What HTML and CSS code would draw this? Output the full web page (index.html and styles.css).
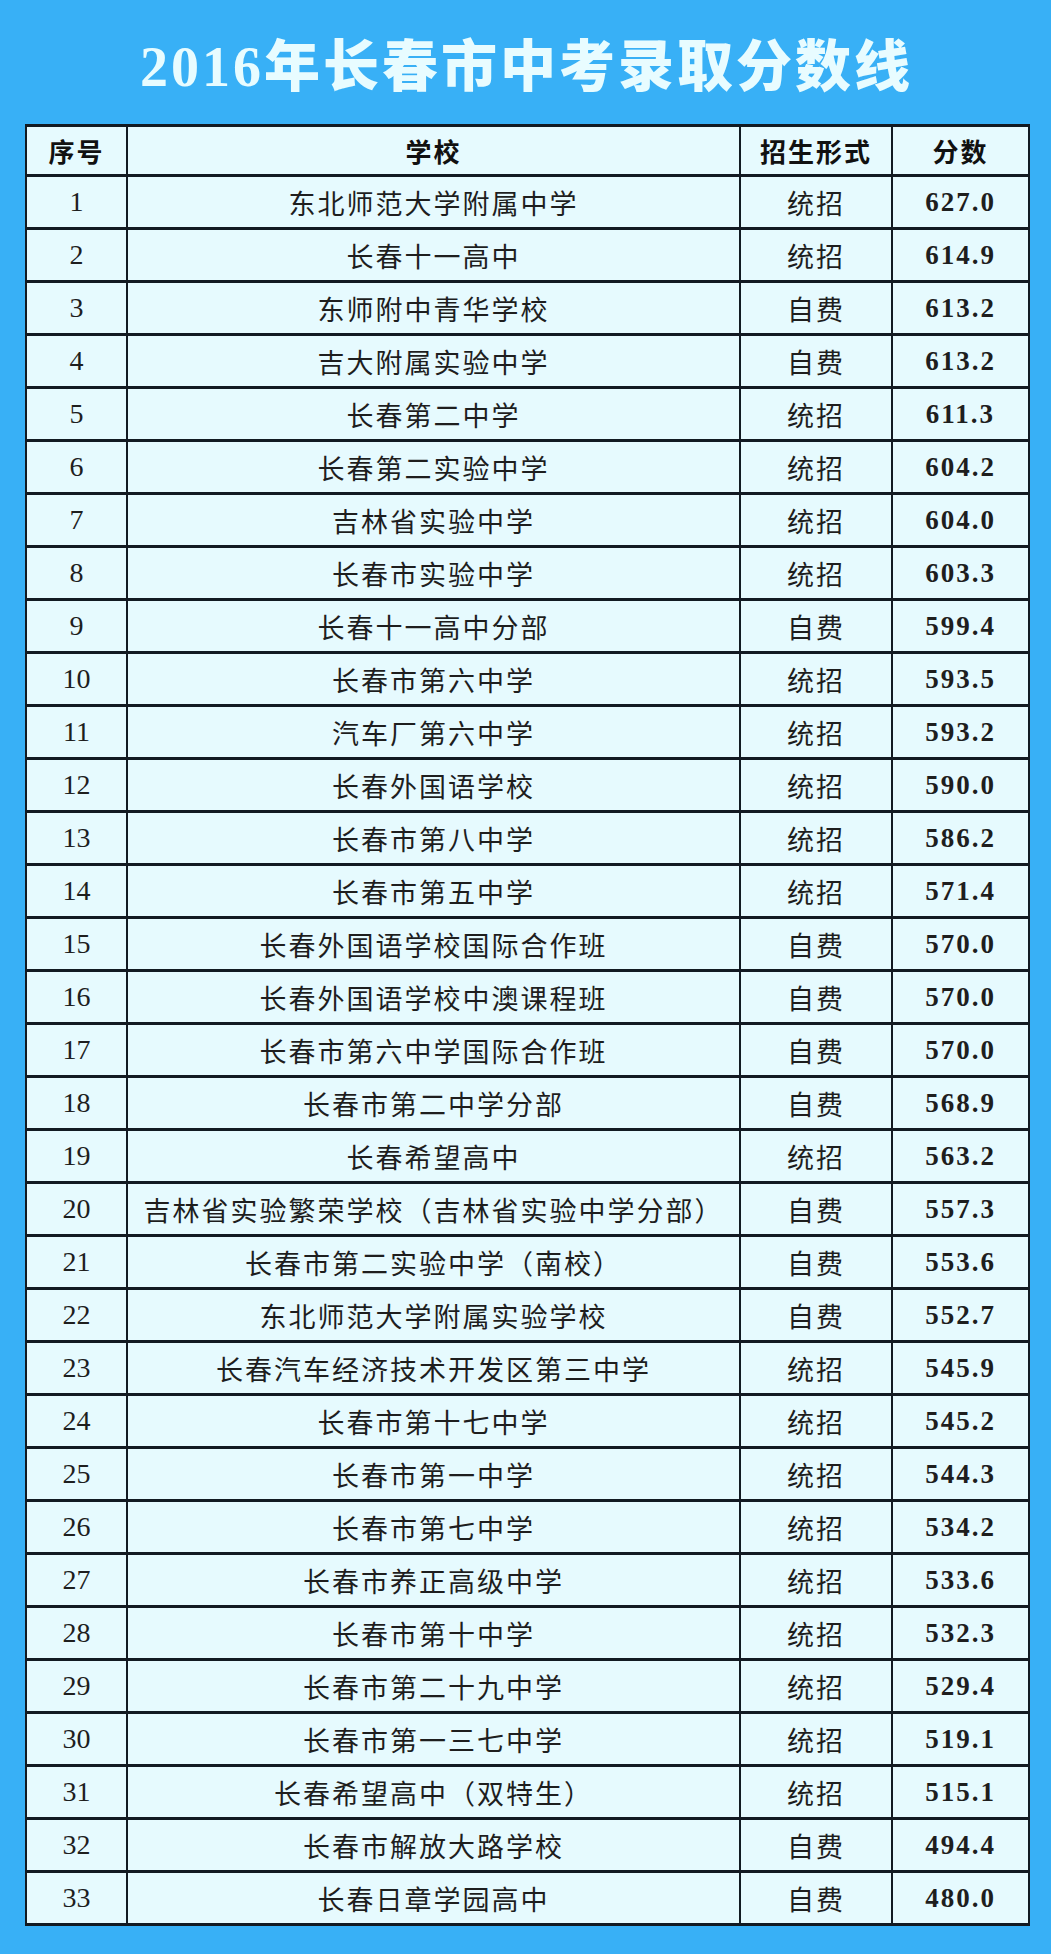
FILE: index.html
```html
<!DOCTYPE html>
<html lang="zh-CN">
<head>
<meta charset="utf-8">
<title>2016年长春市中考录取分数线</title>
<link rel="stylesheet" href="styles.css">
</head>
<body>
<div class="page">
  <h1 class="title">2016年长春市中考录取分数线</h1>
  <table class="scores">
    <colgroup>
      <col class="c-no"><col class="c-school"><col class="c-type"><col class="c-score">
    </colgroup>
    <thead>
      <tr><th>序号</th><th>学校</th><th>招生形式</th><th>分数</th></tr>
    </thead>
    <tbody>
      <tr><td class="no">1</td><td class="school">东北师范大学附属中学</td><td class="type">统招</td><td class="score">627.0</td></tr>
      <tr><td class="no">2</td><td class="school">长春十一高中</td><td class="type">统招</td><td class="score">614.9</td></tr>
      <tr><td class="no">3</td><td class="school">东师附中青华学校</td><td class="type">自费</td><td class="score">613.2</td></tr>
      <tr><td class="no">4</td><td class="school">吉大附属实验中学</td><td class="type">自费</td><td class="score">613.2</td></tr>
      <tr><td class="no">5</td><td class="school">长春第二中学</td><td class="type">统招</td><td class="score">611.3</td></tr>
      <tr><td class="no">6</td><td class="school">长春第二实验中学</td><td class="type">统招</td><td class="score">604.2</td></tr>
      <tr><td class="no">7</td><td class="school">吉林省实验中学</td><td class="type">统招</td><td class="score">604.0</td></tr>
      <tr><td class="no">8</td><td class="school">长春市实验中学</td><td class="type">统招</td><td class="score">603.3</td></tr>
      <tr><td class="no">9</td><td class="school">长春十一高中分部</td><td class="type">自费</td><td class="score">599.4</td></tr>
      <tr><td class="no">10</td><td class="school">长春市第六中学</td><td class="type">统招</td><td class="score">593.5</td></tr>
      <tr><td class="no">11</td><td class="school">汽车厂第六中学</td><td class="type">统招</td><td class="score">593.2</td></tr>
      <tr><td class="no">12</td><td class="school">长春外国语学校</td><td class="type">统招</td><td class="score">590.0</td></tr>
      <tr><td class="no">13</td><td class="school">长春市第八中学</td><td class="type">统招</td><td class="score">586.2</td></tr>
      <tr><td class="no">14</td><td class="school">长春市第五中学</td><td class="type">统招</td><td class="score">571.4</td></tr>
      <tr><td class="no">15</td><td class="school">长春外国语学校国际合作班</td><td class="type">自费</td><td class="score">570.0</td></tr>
      <tr><td class="no">16</td><td class="school">长春外国语学校中澳课程班</td><td class="type">自费</td><td class="score">570.0</td></tr>
      <tr><td class="no">17</td><td class="school">长春市第六中学国际合作班</td><td class="type">自费</td><td class="score">570.0</td></tr>
      <tr><td class="no">18</td><td class="school">长春市第二中学分部</td><td class="type">自费</td><td class="score">568.9</td></tr>
      <tr><td class="no">19</td><td class="school">长春希望高中</td><td class="type">统招</td><td class="score">563.2</td></tr>
      <tr><td class="no">20</td><td class="school">吉林省实验繁荣学校（吉林省实验中学分部）</td><td class="type">自费</td><td class="score">557.3</td></tr>
      <tr><td class="no">21</td><td class="school">长春市第二实验中学（南校）</td><td class="type">自费</td><td class="score">553.6</td></tr>
      <tr><td class="no">22</td><td class="school">东北师范大学附属实验学校</td><td class="type">自费</td><td class="score">552.7</td></tr>
      <tr><td class="no">23</td><td class="school">长春汽车经济技术开发区第三中学</td><td class="type">统招</td><td class="score">545.9</td></tr>
      <tr><td class="no">24</td><td class="school">长春市第十七中学</td><td class="type">统招</td><td class="score">545.2</td></tr>
      <tr><td class="no">25</td><td class="school">长春市第一中学</td><td class="type">统招</td><td class="score">544.3</td></tr>
      <tr><td class="no">26</td><td class="school">长春市第七中学</td><td class="type">统招</td><td class="score">534.2</td></tr>
      <tr><td class="no">27</td><td class="school">长春市养正高级中学</td><td class="type">统招</td><td class="score">533.6</td></tr>
      <tr><td class="no">28</td><td class="school">长春市第十中学</td><td class="type">统招</td><td class="score">532.3</td></tr>
      <tr><td class="no">29</td><td class="school">长春市第二十九中学</td><td class="type">统招</td><td class="score">529.4</td></tr>
      <tr><td class="no">30</td><td class="school">长春市第一三七中学</td><td class="type">统招</td><td class="score">519.1</td></tr>
      <tr><td class="no">31</td><td class="school">长春希望高中（双特生）</td><td class="type">统招</td><td class="score">515.1</td></tr>
      <tr><td class="no">32</td><td class="school">长春市解放大路学校</td><td class="type">自费</td><td class="score">494.4</td></tr>
      <tr><td class="no">33</td><td class="school">长春日章学园高中</td><td class="type">自费</td><td class="score">480.0</td></tr>
    </tbody>
  </table>
</div>
</body>
</html>
```

FILE: styles.css
```css
html, body {
  margin: 0;
  padding: 0;
}

body {
  background: #38b0f6;
  width: 1051px;
  height: 1954px;
  overflow: hidden;
}

.page {
  padding: 0 23px 32px 25px;
}

.title {
  margin: 0;
  padding-top: 38px;
  height: 58px;
  margin-bottom: 28px;
  line-height: 58px;
  text-align: center;
  font-family: "Liberation Serif", "Noto Sans CJK SC", serif;
  font-weight: 900;
  font-size: 56px;
  letter-spacing: 3px;
  color: #e8fcff;
  padding-left: 0;
}

.scores {
  width: 1003px;
  border-collapse: collapse;
  table-layout: fixed;
  background: #e6fafe;
}

.c-no { width: 101px; }
.c-school { width: 613px; }
.c-type { width: 152px; }
.c-score { width: 137px; }

.scores th,
.scores td {
  border-left: 2px solid #121a22;
  border-right: 2px solid #121a22;
  border-top: 3px solid #121a22;
  border-bottom: 3px solid #121a22;
  padding: 0;
  text-align: center;
  vertical-align: middle;
  color: #1e1e1e;
}

.scores thead tr { height: 50px; }
.scores tbody tr { height: 53px; }

.scores th {
  font-family: "Noto Sans CJK SC", sans-serif;
  font-weight: 700;
  font-size: 26px;
  letter-spacing: 2px;
  color: #111;
}

.no {
  font-family: "Liberation Serif", serif;
  font-size: 28px;
}

.school,
.type {
  font-family: "Noto Sans CJK SC", sans-serif;
  font-weight: 400;
  font-size: 27px;
  letter-spacing: 2px;
  color: #222;
}

.score {
  font-family: "Liberation Serif", serif;
  font-weight: 700;
  font-size: 27px;
  letter-spacing: 2px;
  color: #111;
}
```
